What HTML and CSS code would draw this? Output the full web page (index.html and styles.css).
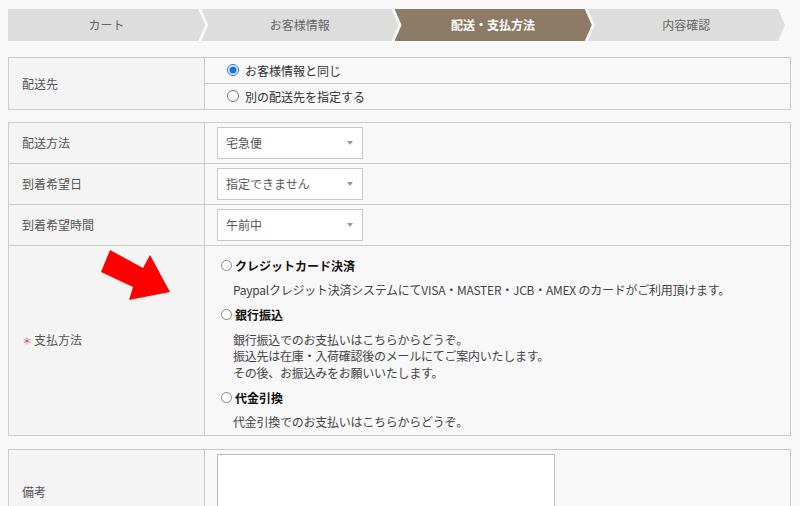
FILE: index.html
```html
<!DOCTYPE html>
<html lang="ja">

<head>
    <meta charset="UTF-8">
    <meta name="viewport" content="width=device-width, initial-scale=1.0">
    <title>配送・支払方法</title>
    <link rel="stylesheet" href="styles.css">
</head>

<body>
    <div class="page">
        <ol class="steps">
            <li class="step first">カート</li>
            <li class="step">お客様情報</li>
            <li class="step active">配送・支払方法</li>
            <li class="step">内容確認</li>
        </ol>

        <table class="form-table first-table">
            <tr>
                <th rowspan="2">配送先</th>
                <td class="radio-row"><label><input type="radio" name="dest" checked> お客様情報と同じ</label></td>
            </tr>
            <tr>
                <td class="radio-row"><label><input type="radio" name="dest"> 別の配送先を指定する</label></td>
            </tr>
        </table>

        <table class="form-table">
            <tr class="select-row">
                <th>配送方法</th>
                <td>
                    <div class="select-box">宅急便</div>
                </td>
            </tr>
            <tr class="select-row">
                <th>到着希望日</th>
                <td>
                    <div class="select-box">指定できません</div>
                </td>
            </tr>
            <tr class="select-row">
                <th>到着希望時間</th>
                <td>
                    <div class="select-box">午前中</div>
                </td>
            </tr>
            <tr>
                <th><span class="required">＊</span>支払方法</th>
                <td class="payment">
                    <div class="pay-option"><span class="circle"></span>クレジットカード決済</div>
                    <p class="pay-desc">Paypalクレジット決済システムにてVISA・MASTER・JCB・AMEX のカードがご利用頂けます。</p>
                    <div class="pay-option"><span class="circle"></span>銀行振込</div>
                    <p class="pay-desc multi">銀行振込でのお支払いはこちらからどうぞ。<br>振込先は在庫・入荷確認後のメールにてご案内いたします。<br>その後、お振込みをお願いいたします。</p>
                    <div class="pay-option"><span class="circle"></span>代金引換</div>
                    <p class="pay-desc last">代金引換でのお支払いはこちらからどうぞ。</p>
                </td>
            </tr>
        </table>

        <table class="form-table">
            <tr>
                <th>備考</th>
                <td class="note"><textarea></textarea></td>
            </tr>
        </table>
    </div>

    <!-- 注目矢印 -->
    <svg class="pointer" width="80" height="60" viewBox="0 0 80 60">
        <polygon points="15,5 48,23 55,10 75,47 34,55 38,42 6,27" fill="#ff0000"></polygon>
    </svg>
</body>

</html>
```

FILE: styles.css
```css
body {
    margin: 0;
    background: #f8f8f8;
    font-family: 'Noto Sans CJK JP', sans-serif;
    font-size: 12px;
    color: #555;
    position: relative;
}

.page {
    padding: 9px 9px 20px 8px;
}

.steps {
    display: flex;
    list-style: none;
    margin: 0 6px 16px 0;
    padding: 0;
}

.step {
    flex: 1;
    height: 32px;
    line-height: 31px;
    text-align: center;
    background: #dddddd;
    color: #666;
    margin-left: -4px;
    clip-path: polygon(0 0, calc(100% - 7px) 0, 100% 50%, calc(100% - 7px) 100%, 0 100%, 7px 50%);
}

.step.first {
    margin-left: 0;
    clip-path: polygon(0 0, calc(100% - 7px) 0, 100% 50%, calc(100% - 7px) 100%, 0 100%);
}

.step.active {
    background: #8d7b66;
    color: #fff;
    font-weight: bold;
}

.form-table {
    width: 100%;
    border-collapse: collapse;
    margin-bottom: 13px;
}

.first-table {
    margin-bottom: 12px;
}

.form-table th,
.form-table td {
    border: 1px solid #cccccc;
}

.form-table th {
    width: 182px;
    background: #f4f4f4;
    text-align: left;
    font-weight: normal;
    padding: 0 0 1px 13px;
    color: #555;
}

.form-table td {
    background: #f8f8f8;
    padding: 0 12px;
}

.radio-row {
    height: 25px;
    color: #333;
}

.radio-row label {
    display: flex;
    align-items: center;
    padding-bottom: 1px;
}

.radio-row input {
    margin: 0 6px 0 10px;
    width: 12px;
    height: 12px;
    accent-color: #1a6fe0;
}

.select-row td {
    height: 40px;
}

.select-box {
    position: relative;
    width: 136px;
    height: 30px;
    line-height: 29px;
    padding-left: 8px;
    background: #fff;
    border: 1px solid #c8c8c8;
    color: #555;
}

.select-box::after {
    content: "";
    position: absolute;
    right: 9px;
    top: 13px;
    border-left: 3px solid transparent;
    border-right: 3px solid transparent;
    border-top: 4px solid #999;
}

.payment {
    padding: 11px 12px 0 16px !important;
    color: #444;
}

.pay-option {
    display: flex;
    align-items: center;
    line-height: 17px;
    font-weight: bold;
    color: #111;
}

.circle {
    width: 9px;
    height: 9px;
    border: 1px solid #888;
    border-radius: 50%;
    background: #fff;
    margin-right: 3px;
}

.pay-desc {
    margin: 8px 0 7px 12px;
    line-height: 16.5px;
    letter-spacing: -0.25px;
}

.pay-desc.multi {
    margin: 9px 0 8px 12px;
}

.pay-desc.last {
    margin-bottom: 4px;
}

.required {
    color: #e0417a;
    margin-right: 2px;
    font-size: 10px;
}

.note {
    vertical-align: top;
    padding: 4px 12px 4px !important;
}

.note textarea {
    display: block;
    box-sizing: border-box;
    width: 338px;
    height: 76px;
    border: 1px solid #bbb;
    background: #fff;
    margin: 0;
    resize: none;
}

.pointer {
    position: absolute;
    left: 95px;
    top: 245px;
}
```
